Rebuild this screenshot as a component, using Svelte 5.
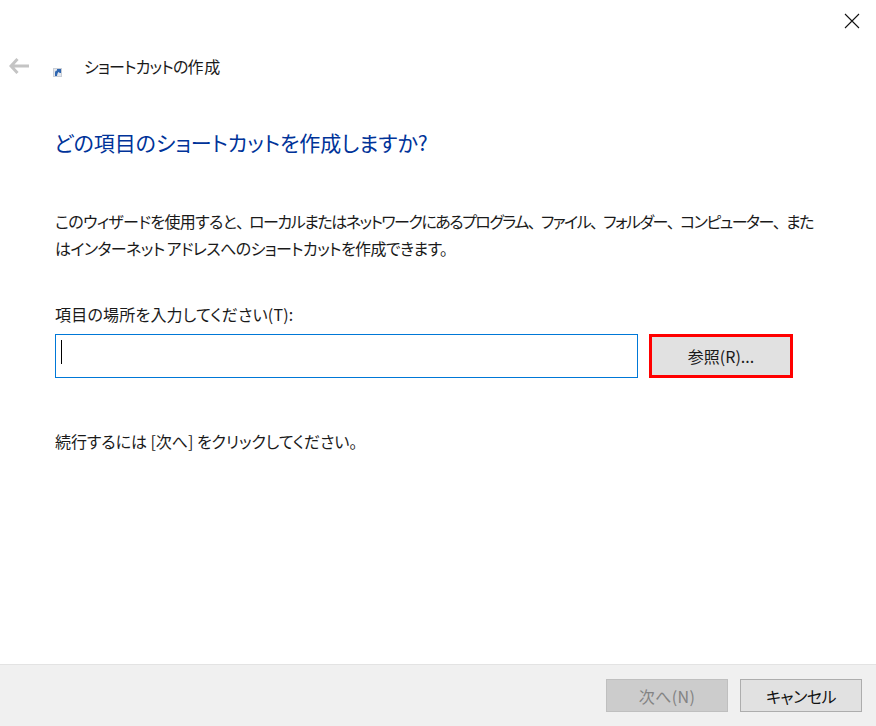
<script>
  const line1 = ['ローカルまたはネットワークにあるプログラム', 'ファイル', 'フォルダー', 'コンピューター'];
  const line2 = 'はインターネット アドレスへのショートカットを作成できます。';
</script>

<div class="window">
  <div class="main">
    <div class="close-row">
      <svg class="close" width="16" height="16" viewBox="0 0 16 16" aria-label="閉じる">
        <path d="M1 1 L15 15 M15 1 L1 15" stroke="#111" stroke-width="1.1" fill="none" />
      </svg>
    </div>
    <div class="titlebar">
      <svg class="back" width="20" height="18" viewBox="0 0 20 18" aria-label="戻る">
        <path d="M8.5 2 L2 9 L8.5 16 M2 9 H20" stroke="#c4c4c4" stroke-width="3" fill="none" />
      </svg>
      <svg class="appicon" width="9" height="9" viewBox="0 0 9 9">
        <rect width="9" height="9" fill="#e4e7ec" />
        <rect x="0.5" y="0.5" width="8" height="8" fill="none" stroke="#c9ced6" />
        <path d="M2 8 V4.5 Q2 2.5 4 2.5 V1 H8 V5 H6.5 L6 4 Q4.5 4 4 8 Z" fill="#2f66b0" />
      </svg>
      <span class="title">ショートカットの<span class="kanji">作成</span></span>
    </div>

    <div class="content">
      <h1>どの項目のショートカットを作成しますか?</h1>
      <p class="desc">
        <span class="lead">このウィザードを使用すると<span class="comma">、</span></span>{#each line1 as part}{part}<span class="comma">、</span>{/each}また<br /><span class="second">{line2}</span>
      </p>
      <label class="field-label" for="loc">項目の場所を入力してください(T):</label>
      <div class="field-row">
        <div class="input" id="loc"><span class="caret"></span></div>
        <button class="browse">参照(R)...</button>
      </div>
      <p class="hint">続行するには [次へ] をクリックしてください。</p>
    </div>
  </div>

  <div class="footer">
    <button class="btn disabled">次へ(N)</button>
    <button class="btn cancel">キャンセル</button>
  </div>
</div>

<style>
  :global(body) {
    margin: 0;
    background: #fff;
  }
  .window {
    width: 876px;
    height: 726px;
    display: flex;
    flex-direction: column;
    font-family: "Noto Sans CJK JP", "Noto Sans", sans-serif;
    font-feature-settings: "palt";
    font-size: 16px;
    color: #1a1a1a;
    overflow: hidden;
  }
  .main {
    flex: 1;
    display: flex;
    flex-direction: column;
  }
  .close-row {
    display: flex;
    justify-content: flex-end;
    padding: 13px 16px 0 0;
    height: 16px;
  }
  .titlebar {
    display: flex;
    align-items: center;
    height: 24px;
    margin-top: 25px;
    padding-left: 9px;
  }
  .back {
    flex: none;
  }
  .appicon {
    flex: none;
    margin: 12px 0 0 24px;
  }
  .title {
    margin-left: 22px;
    font-size: 16px;
    line-height: 24px;
    letter-spacing: -0.8px;
    white-space: nowrap;
  }
  .kanji {
    letter-spacing: 0.6px;
  }
  .content {
    padding: 0 0 0 55px;
  }
  h1 {
    margin: 48px 0 0 -1px;
    font-weight: 400;
    font-size: 21px;
    line-height: 32px;
    color: #003399;
    white-space: nowrap;
  }
  .desc {
    margin: 50px 0 0;
    font-size: 16px;
    line-height: 27px;
    letter-spacing: -1.5px;
    white-space: nowrap;
  }
  .lead {
    letter-spacing: -0.65px;
  }
  .second {
    letter-spacing: -0.6px;
    word-spacing: -1px;
  }
  .comma {
    letter-spacing: 5px;
  }
  .field-label {
    display: block;
    margin-top: 40px;
    line-height: 24px;
    letter-spacing: 0.2px;
    white-space: nowrap;
  }
  .field-row {
    display: flex;
    margin-top: 8px;
    gap: 11px;
  }
  .input {
    box-sizing: border-box;
    width: 583px;
    height: 44px;
    border: 1px solid #0078d7;
    padding: 5px 5px;
    background: #fff;
  }
  .caret {
    display: block;
    width: 1px;
    height: 24px;
    background: #000;
  }
  .browse {
    box-sizing: border-box;
    width: 144px;
    height: 44px;
    border: 3px solid #f00;
    background: #e1e1e1;
    font: inherit;
    color: #1a1a1a;
    padding: 0;
  }
  .hint {
    margin: 51px 0 0;
    line-height: 24px;
    letter-spacing: -0.05px;
    white-space: nowrap;
  }
  .footer {
    box-sizing: border-box;
    height: 62px;
    flex: none;
    display: flex;
    justify-content: flex-end;
    gap: 12px;
    padding: 14px 14px 0 0;
    background: #f0f0f0;
    border-top: 1px solid #e3e3e3;
  }
  .btn {
    box-sizing: border-box;
    width: 122px;
    height: 33px;
    border: 1px solid #adadad;
    background: #e1e1e1;
    font: inherit;
    color: #111;
    padding: 0;
  }
  .cancel {
    letter-spacing: -0.5px;
  }
  .btn.disabled {
    background: #cccccc;
    border-color: #bfbfbf;
    color: #838383;
    letter-spacing: 0.4px;
  }
</style>
